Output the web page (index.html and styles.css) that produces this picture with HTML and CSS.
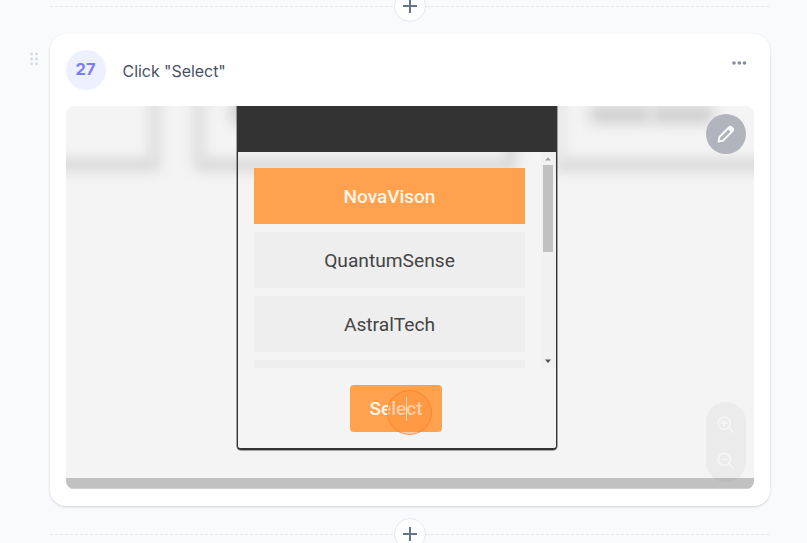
FILE: index.html
```
<!DOCTYPE html>
<html lang="en">
<head>
<meta charset="utf-8">
<title>Step 27</title>
<link rel="stylesheet" href="styles.css">
</head>
<body>
<main class="steps">
  <div class="divider">
    <button class="add" aria-label="Add step"><svg width="14" height="14" viewBox="0 0 14 14"><path d="M7 0v14M0 7h14"/></svg></button>
  </div>
  <article class="card">
    <svg class="grip" width="10" height="14" viewBox="0 0 10 14"><circle cx="1.6" cy="2" r="1.4"/><circle cx="6.6" cy="2" r="1.4"/><circle cx="1.6" cy="7" r="1.4"/><circle cx="6.6" cy="7" r="1.4"/><circle cx="1.6" cy="12" r="1.4"/><circle cx="6.6" cy="12" r="1.4"/></svg>
    <header class="card-head">
      <span class="number">27</span>
      <h2 class="title">Click "Select"</h2>
      <svg class="more" width="16" height="6" viewBox="0 0 16 6"><circle cx="3" cy="3" r="1.8"/><circle cx="8.3" cy="3" r="1.8"/><circle cx="13.5" cy="3" r="1.8"/></svg>
    </header>
    <div class="shot">
      <div class="ghost ghost-left"></div>
      <div class="ghost ghost-mid"></div>
      <div class="ghost ghost-right"></div>
      <div class="smudge smudge-a"></div>
      <div class="smudge smudge-b"></div>
      <div class="smudge smudge-c"></div>
      <section class="modal">
        <div class="modal-bar"></div>
        <div class="viewport">
          <div class="options">
            <div class="option active">NovaVison</div>
            <div class="option">QuantumSense</div>
            <div class="option">AstralTech</div>
            <div class="option"></div>
          </div>
          <div class="scrollbar">
            <svg width="14" height="13" viewBox="0 0 14 13"><path fill="#a3a3a3" d="M4 8.6l3-3.4 3 3.4z"/></svg>
            <div class="thumb"></div>
            <svg class="down" width="14" height="14" viewBox="0 0 14 14"><path fill="#505050" d="M4 5.6h6L7 9z"/></svg>
          </div>
        </div>
        <div class="actions"><div class="select">Select<span class="click"></span><span class="caret"></span></div></div>
      </section>
      <div class="floor"></div>
      <button class="edit" aria-label="Edit"><svg width="20" height="20" viewBox="0 0 20 20"><path d="M2.4 17.6l1-4.6L13.2 3.2a1.5 1.5 0 0 1 2.1 0l1.5 1.5a1.5 1.5 0 0 1 0 2.1L7 16.6z"/><path class="tip" d="M11.6 4.8l1.9-1.9a1.5 1.5 0 0 1 1.9 0l1.7 1.7a1.5 1.5 0 0 1 0 1.9l-1.9 1.9z"/></svg></button>
      <div class="zoom">
        <svg width="18" height="18" viewBox="0 0 18 18"><circle cx="7.3" cy="7.3" r="6"/><path d="M11.7 11.7l5 5M4 7.3h6.6M7.3 4v6.6"/></svg>
        <svg width="18" height="18" viewBox="0 0 18 18"><circle cx="7.3" cy="7.3" r="6"/><path d="M11.7 11.7l5 5M4.3 7.3h6"/></svg>
      </div>
    </div>
  </article>
  <div class="divider">
    <button class="add" aria-label="Add step"><svg width="14" height="14" viewBox="0 0 14 14"><path d="M7 0v14M0 7h14"/></svg></button>
  </div>
</main>
</body>
</html>
```
FILE: styles.css
```
* { box-sizing: border-box; }
html, body { height: 100%; overflow: hidden; }
body { margin: 0; background: #f9fafc; font-family: Inter, "Liberation Sans", sans-serif; }
svg { display: block; flex: none; }
button { padding: 0; font: inherit; }

.steps { width: 720px; margin: -10px 0 0 50px; display: flex; flex-direction: column; gap: 12px; }

.divider { height: 32px; display: flex; align-items: center; justify-content: center; }
.divider::before, .divider::after { content: ""; flex: 1; height: 1px; background: repeating-linear-gradient(90deg, #e2e8f0 0 3px, transparent 3px 5px); }
.add { width: 32px; height: 32px; border: 1px solid #e2e8f0; border-radius: 50%; background: #fff; display: flex; align-items: center; justify-content: center; }
.add svg { stroke: #64748b; stroke-width: 2; fill: none; }

.card { position: relative; height: 472px; padding: 16px; border-radius: 16px; background: #fff; box-shadow: 0 1px 3px rgba(30, 30, 60, .12), 0 1px 2px rgba(30, 30, 60, .06); }
.grip { position: absolute; left: -20px; top: 18px; fill: #d3dae4; }
.card-head { height: 56px; display: flex; align-items: flex-start; }
.number { width: 40px; height: 40px; padding-right: 1px; border-radius: 50%; background: #edf1ff; color: #7c7cf8; font-size: 16.5px; font-weight: 700; line-height: 39px; text-align: center; }
.title { flex: 1; margin: 9px 0 0 16.5px; color: #475266; font-size: 16px; font-weight: 400; line-height: 25px; letter-spacing: -.05px; }
.more { margin: 10px 7px 0 0; fill: #858c9b; }

.shot { position: relative; height: 383px; border-radius: 8px; overflow: hidden; background: #f4f4f4; display: flex; flex-direction: column; }
.ghost { position: absolute; border: 14px solid #dadada; border-radius: 8px; filter: blur(6px); }
.ghost-left { left: -60px; top: -100px; width: 156px; height: 166px; border-right-color: #e0e0e0; }
.ghost-mid { left: 126px; top: -100px; width: 326px; height: 166px; border-left-color: #e0e0e0; }
.ghost-right { left: 486px; top: -100px; width: 326px; height: 166px; border-left-color: #e8e8e8; }
.smudge { position: absolute; background: #cdcdcd; filter: blur(7px); }
.smudge-a { left: 165px; top: -8px; width: 20px; height: 26px; }
.smudge-b { left: 524px; top: 0; width: 60px; height: 17px; }
.smudge-c { left: 586px; top: 0; width: 62px; height: 17px; }

.modal { position: relative; width: 320px; height: 344px; margin-left: 171px; border: solid #333; border-width: 0 1px 2px 1px; border-radius: 0 0 4px 4px; box-shadow: 0 0 0 .5px #555; font-family: Roboto, sans-serif; }
.modal-bar { height: 46px; background: #333; }
.viewport { height: 216px; overflow: hidden; display: flex; justify-content: space-between; padding: 0 1px 0 16px; }
.options { width: 271px; padding-top: 16px; display: flex; flex-direction: column; gap: 8px; }
.option { flex: none; height: 56px; background: #eee; color: #444; font-size: 19.2px; line-height: 57px; text-align: center; }
.active { background: #ffa24f; color: #fff5e8; font-size: 19px; font-weight: 500; }
.scrollbar { width: 14px; height: 216px; background: #f1f1f1; display: flex; flex-direction: column; }
.thumb { width: 10px; height: 87px; margin: 0 auto; background: #c1c1c1; }
.down { margin-top: auto; }
.actions { padding: 17px 2px 0 0; display: flex; justify-content: center; }
.select { position: relative; width: 92px; height: 47px; border-radius: 4px; background: #ffa24f; color: #fff5e8; font-size: 19px; font-weight: 500; line-height: 48px; text-align: center; }
.click { position: absolute; left: 37px; top: 5px; width: 45px; height: 45px; border: 1.5px solid rgba(240, 125, 40, .6); border-radius: 50%; background: rgba(255, 140, 50, .38); }
.caret { position: absolute; left: 56px; top: 12px; width: 1px; height: 24px; background: #ffdfb9; }
.floor { height: 11px; margin-top: auto; background: #c1c1c1; border-bottom: 1px solid #d0d0d0; }

.edit { position: absolute; right: 8px; top: 8px; width: 40px; height: 40px; border: 0; border-radius: 50%; background: #b1b4bd; display: flex; align-items: center; justify-content: center; }
.edit svg { fill: none; stroke: #fff; stroke-width: 1.8; stroke-linejoin: round; }
.edit .tip { fill: #fff; stroke: none; }
.zoom { position: absolute; right: 8px; top: 296px; width: 40px; height: 80px; padding: 14px 11px; border-radius: 20px; background: rgba(80, 80, 80, .05); display: flex; flex-direction: column; gap: 18px; }
.zoom svg { fill: none; stroke: #f6f6f6; stroke-width: 1.6; }
```
